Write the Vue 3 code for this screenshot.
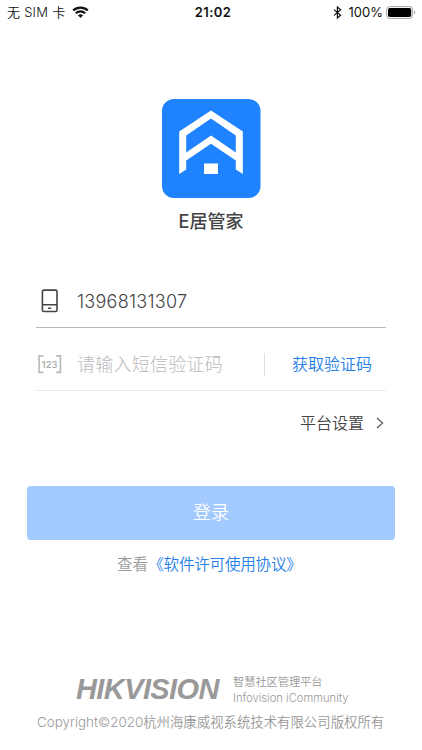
<script setup>
import { ref } from 'vue'

const phone = ref('13968131307')
const code = ref('')
</script>

<template>
  <div class="page">
    <header class="status">
      <div class="carrier">
        <span>无 SIM 卡</span>
        <svg class="wifi" width="17" height="13" viewBox="0 0 17 13">
          <path d="M1.2 4.4C5.2 .6 11.8 .6 15.8 4.4" />
          <path d="M3.8 7.2C6.4 4.8 10.6 4.8 13.2 7.2" />
          <path class="dot" d="M5.9 9.3C7.4 8 9.6 8 11.1 9.3L8.5 11.9Z" />
        </svg>
      </div>
      <span class="time">21:02</span>
      <div class="battery-info">
        <svg class="bluetooth" width="9" height="13" viewBox="0 0 9 13">
          <path d="M1 3.6L7.6 9.2L4.4 12V1L7.6 3.8L1 9.4" />
        </svg>
        <span class="percent">100%</span>
        <svg width="30" height="13" viewBox="0 0 30 13">
          <rect x=".6" y=".6" width="26" height="11.8" rx="3" fill="#fff" stroke="#a3a3a3" />
          <rect x="2" y="2" width="23.2" height="9" rx="1.8" fill="#000" />
          <path d="M28.2 4.6C29.6 5.2 29.6 7.8 28.2 8.4Z" fill="#999" />
        </svg>
      </div>
    </header>

    <section class="brand">
      <svg class="logo" width="99" height="99" viewBox="0 0 99 99">
        <rect width="98.5" height="99" rx="12" fill="#1f82ff" />
        <path
          d="M17.2 32.5L49 11.5L80.8 32.5V75L73.8 70.5V61.5L49 44.8L24.2 61.5V70.5L17.2 75ZM24.2 36.5V53.5L49 36.5L73.8 53.5V36.5L49 19.5Z"
          fill="#fff"
          fill-rule="evenodd"
        />
        <rect x="42" y="64.5" width="14" height="10.5" fill="#fff" />
      </svg>
      <h1>E居管家</h1>
    </section>

    <form class="form" @submit.prevent>
      <div class="field phone">
        <svg class="icon" width="26" height="26" viewBox="0 0 26 26">
          <rect x="6.4" y="2.1" width="14.6" height="21.4" rx="1.5" />
          <path d="M6.4 16.7H21M12.1 20.2H15.2" />
        </svg>
        <input v-model="phone" type="tel" aria-label="手机号" />
      </div>
      <div class="field code">
        <svg class="icon" width="26" height="26" viewBox="0 0 26 26">
          <path d="M7.3 4.9H3.1V21.4H7.3M20.2 4.9H24.4V21.4H20.2" />
          <text x="13.7" y="16.8" text-anchor="middle">123</text>
        </svg>
        <input v-model="code" type="text" placeholder="请输入短信验证码" />
        <button class="get-code" type="button">获取验证码</button>
      </div>
      <a class="settings">
        <span>平台设置</span>
        <svg width="8" height="12" viewBox="0 0 8 12">
          <path d="M1 1L6.6 6L1 11" />
        </svg>
      </a>
    </form>

    <button class="login" type="button">登录</button>
    <p class="agreement">查看<a>《软件许可使用协议》</a></p>

    <footer>
      <div class="company">
        <strong>HIKVISION</strong>
        <div class="platform">
          <span>智慧社区管理平台</span>
          <span class="english">Infovision iCommunity</span>
        </div>
      </div>
      <p class="copyright">Copyright©2020杭州海康威视系统技术有限公司版权所有</p>
    </footer>
  </div>
</template>

<style>
body {
  background: #fff;
}
</style>

<style scoped>
.page {
  box-sizing: border-box;
  width: 422px;
  height: 750px;
  display: flex;
  flex-direction: column;
  overflow: hidden;
  background: #fff;
  color: #444;
  font-family: Inter, "Noto Sans CJK SC", sans-serif;
  font-weight: 350;
}
h1,
p {
  margin: 0;
}
button,
input {
  border: 0;
  padding: 0;
  background: none;
  outline: none;
  font-family: inherit;
  font-weight: inherit;
}
.status {
  display: grid;
  grid-template-columns: 1fr auto 1fr;
  align-items: center;
  height: 24px;
  padding: 0 6px 0 7px;
  color: #111;
  font-size: 13px;
  line-height: 24px;
}
.carrier,
.battery-info {
  display: flex;
  align-items: center;
}
.carrier {
  gap: 7px;
  letter-spacing: 0.25px;
}
.wifi {
  fill: none;
  stroke: #111;
  stroke-width: 2.2;
}
.wifi .dot {
  fill: #111;
  stroke: none;
}
.time {
  padding-left: 3px;
  font-weight: 600;
  letter-spacing: 0.4px;
}
.battery-info {
  justify-content: flex-end;
}
.bluetooth {
  margin-right: 7px;
  fill: none;
  stroke: #111;
  stroke-width: 1.2;
}
.percent {
  margin-right: 3px;
  font-weight: 400;
}
.brand {
  display: flex;
  flex-direction: column;
  align-items: center;
  padding-top: 75px;
}
h1 {
  margin-top: 11px;
  font-size: 18px;
  line-height: 26px;
  font-weight: 500;
}
.form {
  margin: 39px 36px 0;
}
.field {
  box-sizing: border-box;
  display: flex;
  align-items: center;
}
.field input {
  flex: 1;
  min-width: 0;
  height: 30px;
  margin-left: 15px;
  color: #444;
  font-size: 18px;
}
.phone {
  height: 54px;
  padding-top: 1px;
  border-bottom: 1px solid #b8b8b8;
}
.phone input {
  letter-spacing: 0.25px;
}
.code {
  height: 63px;
  padding-top: 10px;
  border-bottom: 1px solid #ebebeb;
}
.field input::placeholder {
  color: #bababe;
  font-weight: 300;
  letter-spacing: 0.25px;
  opacity: 1;
}
.icon {
  flex: none;
  fill: none;
  stroke: #444;
  stroke-width: 1.6;
}
.code .icon {
  stroke: #b8b8b8;
  stroke-width: 1.6;
}
.icon text {
  fill: #aaa;
  stroke: none;
  font-size: 9.5px;
  font-weight: 500;
}
.get-code {
  width: 122px;
  height: 23px;
  padding-right: 14px;
  border-left: 1px solid #dedede;
  color: #2580e8;
  font-size: 16px;
  line-height: 23px;
  text-align: right;
}
.settings {
  display: flex;
  align-items: center;
  justify-content: flex-end;
  gap: 12px;
  height: 63px;
  padding-right: 2px;
  font-size: 16px;
  line-height: 22px;
}
.settings svg {
  fill: none;
  stroke: #666;
  stroke-width: 1.4;
}
.login {
  height: 54px;
  margin: 32px 27px 0;
  border-radius: 4px;
  background: #a3caff;
  color: #fff;
  font-size: 18px;
  line-height: 54px;
}
.agreement {
  margin-top: 13px;
  padding-left: 117px;
  color: #999;
  font-size: 15.6px;
  line-height: 24px;
}
.agreement a {
  color: #2580e8;
  letter-spacing: -0.25px;
}
footer {
  margin-top: 96px;
  color: #999;
}
.company {
  display: flex;
  align-items: center;
  height: 32px;
  padding-left: 76px;
}
.company strong {
  width: 157px;
  font-family: "Liberation Sans", sans-serif;
  font-size: 29px;
  font-style: italic;
  line-height: 32px;
  letter-spacing: -0.6px;
}
.platform {
  display: flex;
  flex-direction: column;
  padding-top: 2px;
  font-size: 11.2px;
  line-height: 16px;
}
.english {
  letter-spacing: 0;
}
.copyright {
  margin-top: 5px;
  padding-left: 37px;
  font-size: 13.4px;
  line-height: 24px;
  white-space: nowrap;
}
</style>
